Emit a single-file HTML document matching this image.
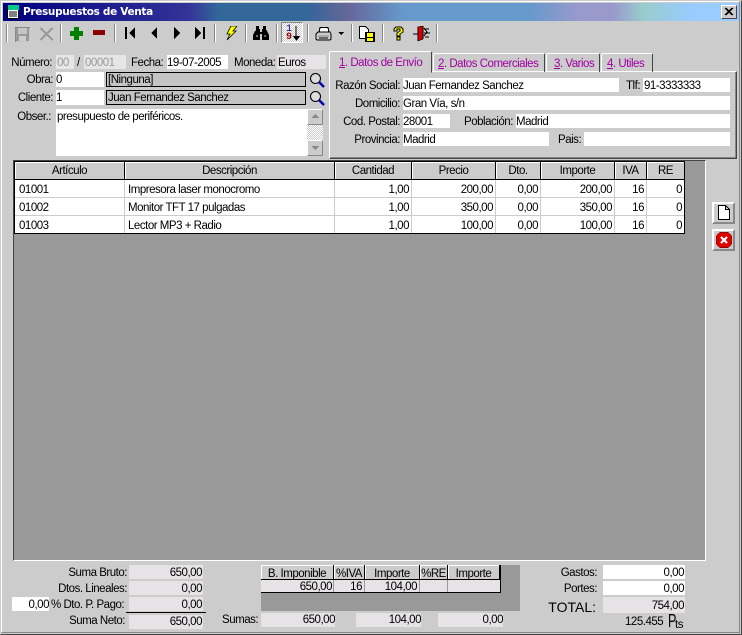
<!DOCTYPE html>
<html><head><meta charset="utf-8"><style>
html,body{margin:0;padding:0;background:#ccc}
#w{position:relative;width:742px;height:635px;overflow:hidden;background:#ccc;font:11.5px/16px "Liberation Sans",sans-serif;letter-spacing:-.48px;color:#000}
#w div,#w svg{position:absolute}
.r{text-align:right;white-space:nowrap}
.l{white-space:nowrap}
.c{text-align:center;white-space:nowrap}
.f{background:#fff;white-space:nowrap;overflow:hidden}
.g{background:#e6e2e6;white-space:nowrap;overflow:hidden}
.sep{width:1px;height:18px;top:24px;background:#888;border-right:1px solid #fff}
.b{background:#ccc;border:2px solid;border-color:#fff #888 #888 #fff;box-sizing:border-box}
.t{color:#a000a0;white-space:nowrap}
.h{background:#ccc;top:162px;height:18px;border-right:1px solid #000;border-bottom:1px solid #000;box-sizing:border-box;text-align:center;line-height:19px;box-shadow:inset 1px 1px 0 #fff;white-space:nowrap}
.d{height:18px;line-height:20px;white-space:nowrap;background:#fff;box-sizing:border-box;border-right:1px solid #ccc;border-bottom:1px solid #ccc;padding:0 2px 0 3px}
.n{text-align:right}
svg{shape-rendering:crispEdges}
</style></head><body><div id="w">
<div style="left:0;top:0;width:742px;height:635px;box-sizing:border-box;border:1px solid;border-color:#ccc #444 #444 #ccc"></div>
<div style="left:1px;top:1px;width:739px;height:632px;box-sizing:border-box;border:1px solid;border-color:#fff #888 #888 #fff"></div>
<div style="left:3px;top:3px;width:736px;height:18px;background:linear-gradient(90deg,#000080 0,#333399 185px,#336699 215px,#336699 305px,#666699 345px,#6699cc 400px,#6699cc 525px,#9999cc 575px,#9999cc 610px,#99cccc 640px,#99ccff 690px)"></div>
<svg style="left:6px;top:4px" width="15" height="16" viewBox="0 0 15 16"><rect x="1.500" y="2.500" width="11" height="12" fill="#fff" stroke="#000"/><rect x="2" y="1" width="11" height="5" fill="#0c8"/><path d="M3 8h8M3 10h8M3 12h8" stroke="#000"/></svg>
<div class="l" style="left:23px;top:5px;color:#fff;font:bold 10.5px/14px 'DejaVu Sans',sans-serif;letter-spacing:-.33px">Presupuestos de Venta</div>
<div class="b" style="left:721px;top:5px;width:16px;height:14px;border-width:1px;border-color:#fff #444 #444 #fff"></div>
<svg style="left:721px;top:5px" width="16" height="14"><path d="M4 3l7 7M5 3l7 7M11 3l-7 7M12 3l-7 7" stroke="#000" shape-rendering="auto"/></svg>

<div class="sep" style="left:6px"></div><div class="sep" style="left:60px"></div><div class="sep" style="left:114px"></div><div class="sep" style="left:214px"></div><div class="sep" style="left:245px"></div><div class="sep" style="left:276px"></div><div class="sep" style="left:307px"></div><div class="sep" style="left:351px"></div><div class="sep" style="left:382px"></div><div class="sep" style="left:436px"></div>

<svg style="left:15px;top:27px" width="15" height="15"><rect x=".5" y=".5" width="14" height="14" fill="#999" stroke="#888"/><rect x="3" y="1" width="9" height="6" fill="#c4c4c4"/><rect x="4" y="9" width="7" height="5" fill="#ccc"/><path d="M15 1v14H1" stroke="#fff" fill="none"/></svg>
<svg style="left:39px;top:27px" width="15" height="15"><path d="M1 1l12 12M2 1l12 12M13 1L1 13M14 1L2 13" stroke="#999" stroke-width="1.400" shape-rendering="auto"/></svg>
<svg style="left:70px;top:27px" width="13" height="13"><path d="M4 0h5v4h4v5H9v4H4V9H0V4h4z" fill="#008000"/></svg>
<div style="left:93px;top:30px;width:12px;height:5px;background:#8b0000"></div>
<svg style="left:125px;top:27px" width="11" height="12"><path d="M0 0h2v12H0zM10 0v12L4 6z" fill="#000"/></svg>
<svg style="left:150px;top:27px" width="8" height="12"><path d="M7 0v12L1 6z" fill="#000"/></svg>
<svg style="left:173px;top:27px" width="8" height="12"><path d="M1 0v12l6-6z" fill="#000"/></svg>
<svg style="left:195px;top:27px" width="11" height="12"><path d="M0 0v12l6-6zM8 0h2v12H8z" fill="#000"/></svg>
<svg style="left:225px;top:26px" width="13" height="15"><path d="M6 0h6L8 5h3L2 14l3-6H2z" fill="#ff0" stroke="#000" stroke-width=".8" shape-rendering="auto"/></svg>
<svg style="left:253px;top:26px" width="16" height="14"><path d="M3 0h3v3h1v3h2V3h1V0h3v4l1 1 2 4v5H9V8H7v6H0V9l2-4 1-1z" fill="#000"/><path d="M3 10h2M11 10h2M7 4h2" stroke="#ccc"/></svg>
<div style="left:281px;top:22px;width:22px;height:21px;box-sizing:border-box;border:1px solid;border-color:#888 #fff #fff #888;background:#eee repeating-conic-gradient(#ccc 0 25%,#fff 0 50%) 0 0/2px 2px"></div>
<div class="l" style="left:286px;top:24px;font:10px/11px 'Liberation Mono',monospace;letter-spacing:0;color:#00008b">1</div>
<div class="l" style="left:286px;top:32px;font:bold 10px/11px 'Liberation Mono',monospace;letter-spacing:0;color:#900">9</div>
<svg style="left:293px;top:26px" width="8" height="16"><path d="M3 0v11" stroke="#000"/><path d="M0 10h7l-3.500 5z" fill="#000"/></svg>
<svg style="left:315px;top:27px" width="17" height="14"><path d="M5 .5h8l1 5H4z" fill="#fff" stroke="#000"/><path d="M1 7l2-2h12l1 2v5l-1 1H2l-1-1z" fill="#ccc" stroke="#000"/><path d="M3 9h11" stroke="#888"/><path d="M4 11h9" stroke="#000"/></svg>
<svg style="left:338px;top:32px" width="6" height="4"><path d="M0 0h6L3 3z" fill="#000"/></svg>
<svg style="left:359px;top:26px" width="17" height="16"><path d="M.5 .5h6l3 3v9h-9z" fill="#fff" stroke="#000"/><rect x="6" y="6" width="10" height="10" fill="#000"/><rect x="8" y="7" width="6" height="4" fill="#ff0"/><rect x="8" y="12" width="6" height="3" fill="#ff0"/></svg>
<svg style="left:393px;top:26px" width="11" height="15"><path d="M1 3l2-2h5l2 2v3L7 8v2H4V7l3-2V3H4v2H1z" fill="#ff0" stroke="#000" stroke-width=".8"/><rect x="4" y="11" width="3" height="3" fill="#ff0" stroke="#000" stroke-width=".6"/></svg>
<svg style="left:413px;top:26px" width="18" height="15"><path d="M5 1l5-1v13l-5 2z" fill="#d00" stroke="#000" stroke-width=".6"/><path d="M0 8h5M11 3h5M11 7h6M12 11h4" stroke="#000"/><path d="M11 2l3 4-3 4" fill="none" stroke="#000"/></svg>

<div class="r" style="left:0;width:52px;top:55px">Número:</div>
<div class="g" style="left:56px;top:55px;width:18px;height:14px;background:#e6e6e6;color:#999;padding-left:1px;box-sizing:border-box">00</div>
<div class="l" style="left:77px;top:55px">/</div>
<div class="g" style="left:84px;top:55px;width:42px;height:14px;background:#e6e6e6;color:#999;padding-left:1px;box-sizing:border-box">00001</div>
<div class="l" style="left:131px;top:55px">Fecha:</div>
<div class="f" style="left:167px;top:55px;width:61px;height:14px">19-07-2005</div>
<div class="l" style="left:234px;top:55px">Moneda:</div>
<div class="g" style="left:277px;top:55px;width:49px;height:14px;padding-left:1px;box-sizing:border-box">Euros</div>

<div class="r" style="left:0;width:53px;top:72px">Obra:</div>
<div class="f" style="left:56px;top:72px;width:48px;height:15px;line-height:16px">0</div>
<div style="left:106px;top:72px;width:200px;height:15px;box-sizing:border-box;border:1px solid #000;background:#c4c4c4;line-height:14px;padding-left:1px;white-space:nowrap">[Ninguna]</div>
<div class="r" style="left:0;width:53px;top:90px">Cliente:</div>
<div class="f" style="left:56px;top:90px;width:48px;height:15px;line-height:16px">1</div>
<div style="left:106px;top:90px;width:200px;height:15px;box-sizing:border-box;border:1px solid #000;background:#c4c4c4;line-height:14px;padding-left:1px;white-space:nowrap">Juan Fernandez Sanchez</div>
<svg style="left:309px;top:72px" width="16" height="17"><circle cx="6.500" cy="6.500" r="5" fill="#ddd" stroke="#000" stroke-width="1.100" shape-rendering="auto"/><path d="M10 10l5 5" stroke="#00a" stroke-width="2.500" shape-rendering="auto"/></svg>
<svg style="left:309px;top:90px" width="16" height="17"><circle cx="6.500" cy="6.500" r="5" fill="#ddd" stroke="#000" stroke-width="1.100" shape-rendering="auto"/><path d="M10 10l5 5" stroke="#00a" stroke-width="2.500" shape-rendering="auto"/></svg>
<div class="r" style="left:0;width:51px;top:109px">Obser.:</div>
<div class="f" style="left:56px;top:109px;width:251px;height:47px;padding-left:1px;box-sizing:border-box">presupuesto de periféricos.</div>
<div style="left:307px;top:109px;width:16px;height:47px;background:repeating-conic-gradient(#ccc 0 25%,#fff 0 50%) 0 0/2px 2px"></div>
<div class="b" style="left:307px;top:109px;width:16px;height:16px;border-width:1px"></div>
<div class="b" style="left:307px;top:140px;width:16px;height:16px;border-width:1px"></div>
<svg style="left:311px;top:114px" width="9" height="5"><path d="M4 0l4 4H0z" fill="#888"/></svg>
<svg style="left:311px;top:146px" width="9" height="5"><path d="M0 0h8L4 4z" fill="#888"/></svg>

<!-- tabs -->
<div style="left:329px;top:71px;width:408px;height:88px;box-sizing:border-box;border:1px solid;border-color:#fff #444 #444 #fff;box-shadow:inset -1px -1px 0 #888"></div>
<div style="left:433px;top:53px;width:112px;height:19px;box-sizing:border-box;border:1px solid;border-color:#fff #444 transparent #fff;border-bottom:0;border-radius:2px 2px 0 0"></div>
<div style="left:546px;top:53px;width:54px;height:19px;box-sizing:border-box;border:1px solid;border-color:#fff #444 transparent #fff;border-bottom:0;border-radius:2px 2px 0 0"></div>
<div style="left:601px;top:53px;width:52px;height:19px;box-sizing:border-box;border:1px solid;border-color:#fff #444 transparent #fff;border-bottom:0;border-radius:2px 2px 0 0"></div>
<div style="left:329px;top:51px;width:103px;height:22px;box-sizing:border-box;background:#ccc;border:1px solid;border-color:#fff #444 #ccc #fff;border-radius:2px 2px 0 0"></div>
<div class="t" style="left:339px;top:55px"><u>1</u>. Datos de Envío</div>
<div class="t" style="left:438px;top:56px"><u>2</u>. Datos Comerciales</div>
<div class="t" style="left:554px;top:56px"><u>3</u>. Varios</div>
<div class="t" style="left:607px;top:56px"><u>4</u>. Utiles</div>

<div class="r" style="left:330px;width:70px;top:78px">Razón Social:</div>
<div class="f" style="left:403px;top:78px;width:216px;height:14px">Juan Fernandez Sanchez</div>
<div class="l" style="left:626px;top:78px">Tlf:</div>
<div class="f" style="left:643px;top:78px;width:87px;height:14px;padding-left:1px;box-sizing:border-box">91-3333333</div>
<div class="r" style="left:330px;width:70px;top:96px">Domicilio:</div>
<div class="f" style="left:403px;top:96px;width:327px;height:14px">Gran Vía, s/n</div>
<div class="r" style="left:330px;width:70px;top:114px">Cod. Postal:</div>
<div class="f" style="left:403px;top:114px;width:47px;height:14px">28001</div>
<div class="l" style="left:464px;top:114px">Población:</div>
<div class="f" style="left:516px;top:114px;width:214px;height:14px">Madrid</div>
<div class="r" style="left:330px;width:70px;top:132px">Provincia:</div>
<div class="f" style="left:403px;top:132px;width:146px;height:14px">Madrid</div>
<div class="l" style="left:558px;top:132px">Pais:</div>
<div class="f" style="left:584px;top:132px;width:146px;height:14px"></div>

<!-- grid -->
<div style="left:13px;top:160px;width:693px;height:401px;box-sizing:border-box;background:#999;border:1px solid;border-color:#444 #fff #fff #444"></div>
<div style="left:15px;top:161px;width:670px;height:1px;background:#000"></div>
<div style="left:14px;top:161px;width:1px;height:73px;background:#000"></div>
<div class="h" style="left:15px;width:110px">Artículo</div>
<div class="h" style="left:125px;width:210px">Descripción</div>
<div class="h" style="left:335px;width:77px">Cantidad</div>
<div class="h" style="left:412px;width:84px">Precio</div>
<div class="h" style="left:496px;width:45px">Dto.</div>
<div class="h" style="left:541px;width:74px">Importe</div>
<div class="h" style="left:615px;width:32px">IVA</div>
<div class="h" style="left:647px;width:38px">RE</div>

<div class="d" style="left:15px;top:180px;width:110px;padding-left:4px">01001</div><div class="d" style="left:125px;top:180px;width:210px">Impresora laser monocromo</div><div class="d n" style="left:335px;top:180px;width:77px">1,00</div><div class="d n" style="left:412px;top:180px;width:84px">200,00</div><div class="d n" style="left:496px;top:180px;width:45px">0,00</div><div class="d n" style="left:541px;top:180px;width:74px">200,00</div><div class="d n" style="left:615px;top:180px;width:32px">16</div><div class="d n" style="left:647px;top:180px;width:38px">0</div>
<div class="d" style="left:15px;top:198px;width:110px;padding-left:4px">01002</div><div class="d" style="left:125px;top:198px;width:210px">Monitor TFT 17 pulgadas</div><div class="d n" style="left:335px;top:198px;width:77px">1,00</div><div class="d n" style="left:412px;top:198px;width:84px">350,00</div><div class="d n" style="left:496px;top:198px;width:45px">0,00</div><div class="d n" style="left:541px;top:198px;width:74px">350,00</div><div class="d n" style="left:615px;top:198px;width:32px">16</div><div class="d n" style="left:647px;top:198px;width:38px">0</div>
<div class="d" style="left:15px;top:216px;width:110px;padding-left:4px">01003</div><div class="d" style="left:125px;top:216px;width:210px">Lector MP3 + Radio</div><div class="d n" style="left:335px;top:216px;width:77px">1,00</div><div class="d n" style="left:412px;top:216px;width:84px">100,00</div><div class="d n" style="left:496px;top:216px;width:45px">0,00</div><div class="d n" style="left:541px;top:216px;width:74px">100,00</div><div class="d n" style="left:615px;top:216px;width:32px">16</div><div class="d n" style="left:647px;top:216px;width:38px">0</div>
<div style="left:14px;top:233px;width:671px;height:1px;background:#000"></div>
<div style="left:684px;top:162px;width:1px;height:72px;background:#000"></div>

<div class="b" style="left:712px;top:202px;width:23px;height:22px"></div>
<svg style="left:717px;top:205px" width="14" height="16"><path d="M1.500 .5h7l4 4v10h-11z" fill="#fff" stroke="#000"/><path d="M8.500 .5v4h4" fill="none" stroke="#000"/></svg>
<div class="b" style="left:712px;top:229px;width:23px;height:22px"></div>
<svg style="left:716px;top:232px" width="16" height="16"><path d="M5 0h6l2 1 2 2 1 2v6l-1 2-2 2-2 1H5l-2-1-2-2-1-2V5l1-2 2-2z" fill="#e00000" stroke="#500" stroke-width=".6"/><path d="M5 5l6 6M11 5l-6 6" stroke="#fff" stroke-width="2.200" shape-rendering="auto"/></svg>

<!-- bottom left -->
<div class="r" style="left:0;width:127px;top:565px">Suma Bruto:</div>
<div class="g r" style="left:129px;top:565px;width:74px;height:14px;padding-right:1px;box-sizing:border-box">650,00</div>
<div class="r" style="left:0;width:127px;top:581px">Dtos. Lineales:</div>
<div class="g r" style="left:129px;top:581px;width:74px;height:14px;padding-right:1px;box-sizing:border-box">0,00</div>
<div class="f r" style="left:12px;top:597px;width:37px;height:14px">0,00</div>
<div class="l" style="left:51px;top:597px">% Dto. P. Pago:</div>
<div class="g r" style="left:129px;top:597px;width:74px;height:14px;padding-right:1px;box-sizing:border-box">0,00</div>
<div style="left:126px;top:612px;width:80px;height:1px;background:#000"></div>
<div class="r" style="left:0;width:125px;top:613px">Suma Neto:</div>
<div class="g r" style="left:129px;top:615px;width:74px;height:14px;line-height:14px;padding-right:1px;box-sizing:border-box">650,00</div>

<!-- iva table -->
<div style="left:261px;top:565px;width:259px;height:46px;background:#999"></div>
<div class="h" style="left:261px;top:565px;width:73px;height:15px;line-height:18px">B. Imponible</div>
<div class="h" style="left:334px;top:565px;width:31px;height:15px;line-height:18px">%IVA</div>
<div class="h" style="left:365px;top:565px;width:55px;height:15px;line-height:18px">Importe</div>
<div class="h" style="left:420px;top:565px;width:28px;height:15px;line-height:18px">%RE</div>
<div class="h" style="left:448px;top:565px;width:52px;height:15px;line-height:18px">Importe</div>
<div class="g r" style="left:261px;top:580px;width:72px;height:12px;line-height:15px;padding-right:1px;box-sizing:border-box">650,00</div>
<div class="g r" style="left:334px;top:580px;width:30px;height:12px;line-height:15px;padding-right:2px;box-sizing:border-box">16</div>
<div class="g r" style="left:365px;top:580px;width:54px;height:12px;line-height:15px;padding-right:2px;box-sizing:border-box">104,00</div>
<div class="g" style="left:420px;top:580px;width:27px;height:12px"></div>
<div class="g" style="left:448px;top:580px;width:52px;height:12px"></div>
<div style="left:261px;top:592px;width:240px;height:1px;background:#000"></div>
<div style="left:500px;top:565px;width:1px;height:28px;background:#000"></div>
<div class="l" style="left:222px;top:612px">Sumas:</div>
<div class="g r" style="left:261px;top:613px;width:74px;height:14px;line-height:14px;box-sizing:border-box">650,00</div>
<div class="g r" style="left:356px;top:613px;width:65px;height:14px;line-height:14px;box-sizing:border-box">104,00</div>
<div class="g r" style="left:438px;top:613px;width:65px;height:14px;line-height:14px;box-sizing:border-box">0,00</div>

<!-- right totals -->
<div class="r" style="left:500px;width:97px;top:565px">Gastos:</div>
<div class="f r" style="left:603px;top:565px;width:82px;height:14px;padding-right:1px;box-sizing:border-box">0,00</div>
<div class="r" style="left:500px;width:97px;top:581px">Portes:</div>
<div class="f r" style="left:603px;top:581px;width:82px;height:14px;padding-right:1px;box-sizing:border-box">0,00</div>
<div class="r" style="left:500px;width:96px;top:598px;font-size:14px;line-height:18px;letter-spacing:0">TOTAL:</div>
<div class="g r" style="left:603px;top:597px;width:82px;height:16px;line-height:19px;padding-right:1px;box-sizing:border-box">754,00</div>
<div class="l" style="left:625px;top:614px">125.455</div>
<div class="l" style="left:668px;top:612px;font-size:18px;line-height:18px;letter-spacing:0;transform:scaleX(.7);transform-origin:left">P</div>
<div class="l" style="left:675px;top:617px">ts</div>
</div></body></html>
